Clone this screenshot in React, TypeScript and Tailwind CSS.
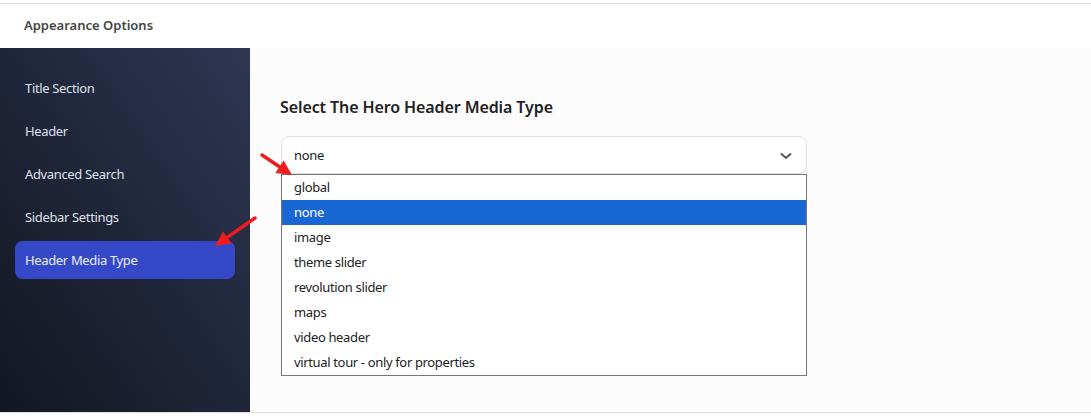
import { useState } from "react";

const menu = ["Title Section", "Header", "Advanced Search", "Sidebar Settings", "Header Media Type"];

const options = [
  "global",
  "none",
  "image",
  "theme slider",
  "revolution slider",
  "maps",
  "video header",
  "virtual tour - only for properties",
];

function Arrow({ x1, y1, x2, y2 }: { x1: number; y1: number; x2: number; y2: number }) {
  // line with a filled triangular head at (x2, y2)
  const a = Math.atan2(y2 - y1, x2 - x1);
  const len = 15;
  const w = 7.5;
  const bx = x2 - len * Math.cos(a);
  const by = y2 - len * Math.sin(a);
  const p1 = `${bx + w * Math.sin(a)},${by - w * Math.cos(a)}`;
  const p2 = `${bx - w * Math.sin(a)},${by + w * Math.cos(a)}`;
  return (
    <g>
      <line x1={x1} y1={y1} x2={bx} y2={by} stroke="#ee1c1c" strokeWidth={3.5} strokeLinecap="round" />
      <polygon points={`${x2},${y2} ${p1} ${p2}`} fill="#ee1c1c" />
    </g>
  );
}

export default function App() {
  const [active] = useState(4);
  const [selected] = useState(1);

  return (
    <div className="relative w-[1091px] h-[416px] bg-white font-['Noto_Sans',sans-serif] text-[13px]">
      <div className="h-[4px] border-b border-[#dddddd]" />

      {/* Top title bar */}
      <div className="h-[44px] flex items-center pl-[24px] font-semibold text-[#454545]">
        Appearance Options
      </div>

      <div className="flex h-[365px] border-b border-[#e2e2e2]">
        {/* Sidebar */}
        <div className="w-[250px] shrink-0 bg-linear-to-tr from-[#131722] to-[#2e3653] pt-[21px] px-[15px] flex flex-col gap-[5px] tracking-[-0.35px]">
          {menu.map((m, i) => (
            <div
              key={m}
              className={
                i === active
                  ? "h-[38px] flex items-center px-[10px] pt-px rounded-lg bg-[#3549c8] text-[#e8ebf7]"
                  : "h-[38px] flex items-center px-[10px] pt-px text-[#dde1ea]"
              }
            >
              {m}
            </div>
          ))}
        </div>

        {/* Content */}
        <div className="flex-1 bg-[#fcfcfc] pt-[47px] pl-[30px]">
          <h2 className="text-[16px] leading-[24px] font-semibold text-[#222222] tracking-[-0.1px]">
            Select The Hero Header Media Type
          </h2>

          <div className="mt-[17px] ml-px w-[526px] tracking-[-0.35px]">
            <div className="h-[38px] bg-white border border-[#dcdce2] rounded-lg flex items-center justify-between pl-[12px] pr-[8px] pt-px text-[#222222]">
              <span>none</span>
              <svg width="12" height="8" viewBox="0 0 12 8" className="mr-[6px]">
                <path d="M1 1.5 L6 6 L11 1.5" fill="none" stroke="#555555" strokeWidth="2" />
              </svg>
            </div>
            <div className="bg-white border border-[#767676]">
              {options.map((o, i) => (
                <div
                  key={o}
                  className={
                    i === selected
                      ? "h-[25px] flex items-center pl-[12px] pt-px bg-[#1967d2] text-white"
                      : "h-[25px] flex items-center pl-[12px] pt-px text-[#222222]"
                  }
                >
                  {o}
                </div>
              ))}
            </div>
          </div>
        </div>
      </div>

      {/* Annotation arrows */}
      <svg className="absolute inset-0 pointer-events-none" width="1091" height="416">
        <Arrow x1={262} y1={155} x2={292} y2={175} />
        <Arrow x1={255} y1={218} x2={215} y2={246} />
      </svg>
    </div>
  );
}
